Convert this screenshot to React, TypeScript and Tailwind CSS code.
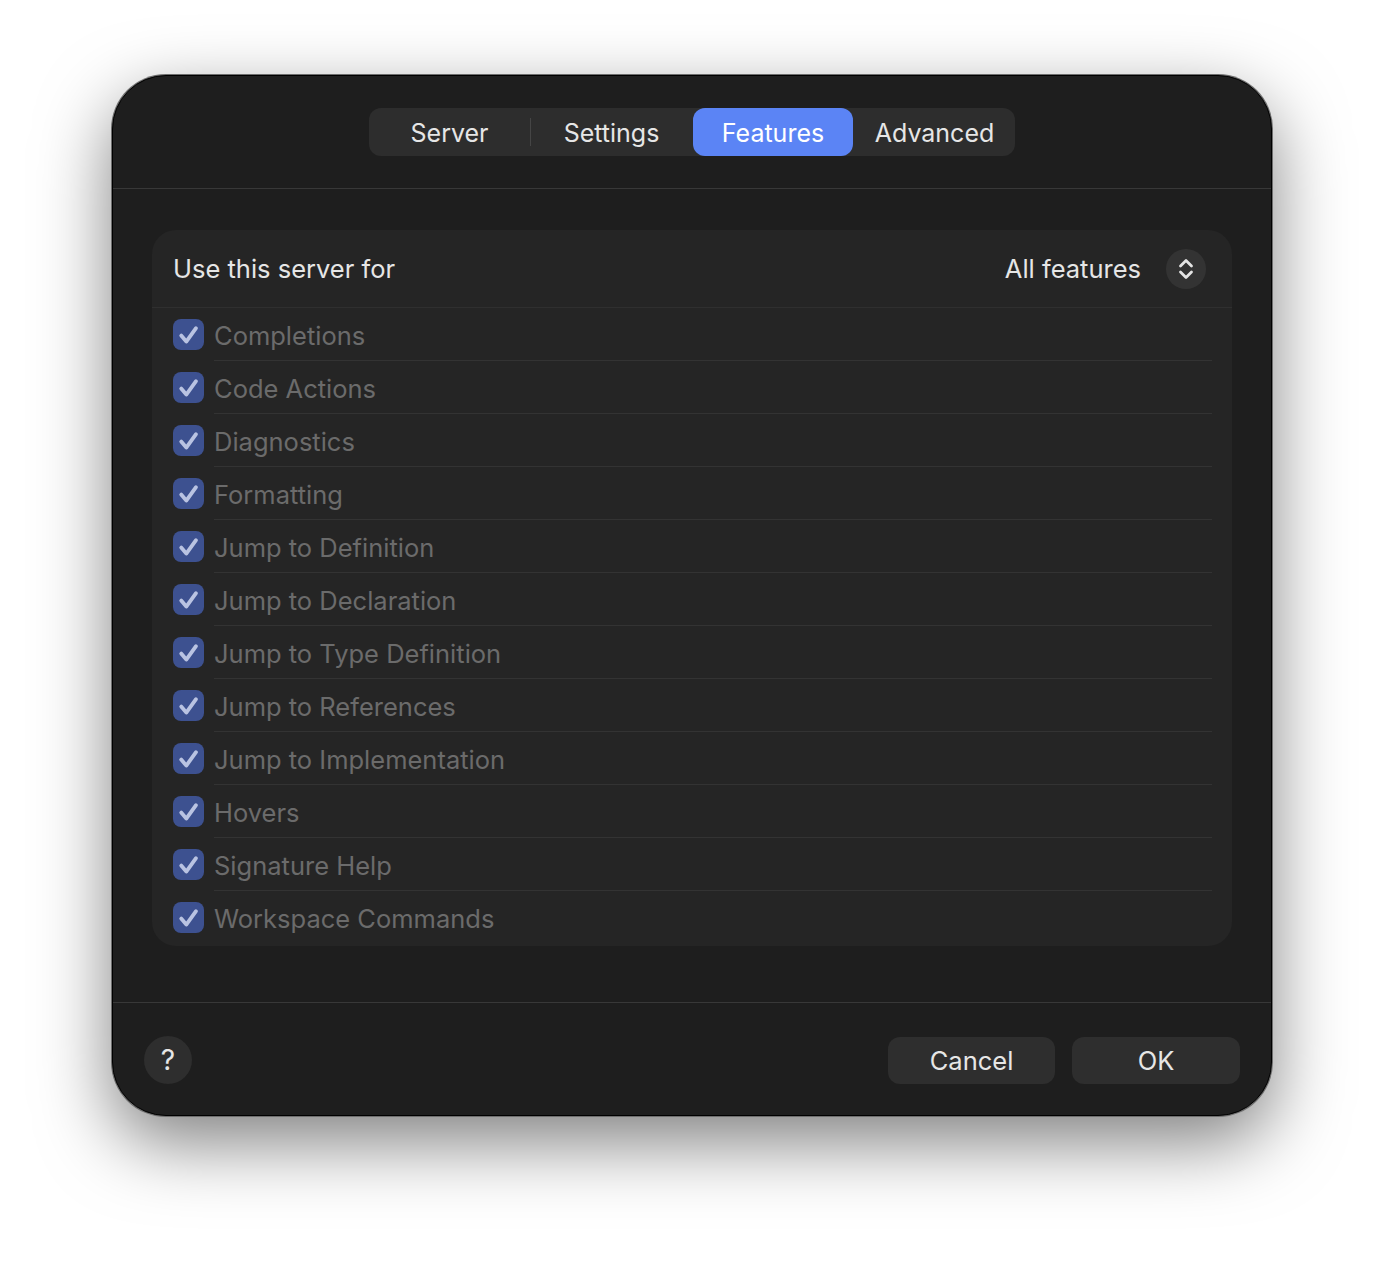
const tabs = ["Server", "Settings", "Features", "Advanced"];

const features = [
  "Completions",
  "Code Actions",
  "Diagnostics",
  "Formatting",
  "Jump to Definition",
  "Jump to Declaration",
  "Jump to Type Definition",
  "Jump to References",
  "Jump to Implementation",
  "Hovers",
  "Signature Help",
  "Workspace Commands",
];

function Check() {
  return (
    <div className="flex h-[31px] w-[31px] shrink-0 items-center justify-center rounded-[8px] bg-[#3d5190]">
      <svg width="31" height="31" viewBox="0 0 31 31" fill="none">
        <path
          d="M8.2 16.6 L13.3 22.6 L23 9.2"
          stroke="#b9c3e2"
          strokeWidth="3.8"
          strokeLinecap="round"
          strokeLinejoin="round"
        />
      </svg>
    </div>
  );
}

function Chevrons() {
  return (
    <svg width="40" height="40" viewBox="0 0 40 40" fill="none">
      <path
        d="M14.5 17 L20 11.5 L25.5 17"
        stroke="#e4e4e4"
        strokeWidth="2.8"
        strokeLinecap="round"
        strokeLinejoin="round"
      />
      <path
        d="M14.5 23 L20 28.5 L25.5 23"
        stroke="#e4e4e4"
        strokeWidth="2.8"
        strokeLinecap="round"
        strokeLinejoin="round"
      />
    </svg>
  );
}

export default function App() {
  const active = "Features";

  return (
    <div className="flex min-h-[1264px] justify-center bg-white pt-[75px] font-['Inter','Liberation_Sans',sans-serif]">
      <div className="flex h-[1041px] w-[1160px] flex-col overflow-hidden rounded-[54px] border border-black bg-[#1e1e1e] text-[#e6e6e6] shadow-[0_0_0_1px_#6e6e6e,0_26px_72px_rgba(0,0,0,0.5)]">
        {/* Tab bar */}
        <div className="flex h-[113px] shrink-0 items-center justify-center border-b border-[#383838]">
          <div className="flex h-[48px] rounded-[12px] bg-[#2d2d2d]">
            {tabs.map((t, i) => {
              const selected = t === active;
              const showDivider =
                i > 0 && !selected && tabs[i - 1] !== active;
              return (
                <div key={t} className="flex items-center">
                  {i > 0 && (
                    <div
                      className={
                        showDivider
                          ? "h-[28px] w-px bg-[#454545]"
                          : "h-[28px] w-px bg-transparent"
                      }
                    />
                  )}
                  <div
                    className={
                      selected
                        ? "flex h-[48px] w-[160px] items-center justify-center rounded-[12px] bg-[#5b84f5] pt-[3px] text-[25px] text-white"
                        : "flex h-[48px] w-[161px] items-center justify-center pt-[3px] text-[25px] text-[#e6e6e6]"
                    }
                  >
                    {t}
                  </div>
                </div>
              );
            })}
          </div>
        </div>

        {/* Content */}
        <div className="flex-1 px-[39px] pt-[41px]">
          <div className="rounded-[24px] bg-[#252525]">
            <div className="flex h-[78px] items-center justify-between border-b border-[#2f2f2f] pl-[21px] pr-[26px]">
              <span className="pt-[2px] text-[25.5px] text-[#e6e6e6]">Use this server for</span>
              <div className="flex items-center gap-[25px]">
                <span className="pt-[2px] text-[25.5px] text-[#e6e6e6]">All features</span>
                <div className="flex h-[40px] w-[40px] items-center justify-center rounded-full bg-[#333333]">
                  <Chevrons />
                </div>
              </div>
            </div>
            <div className="pb-[2px] pl-[21px] pr-[20px]">
              {features.map((f, i) => (
                <div key={f} className="flex items-center gap-[10px]">
                  <Check />
                  <div
                    className={
                      i < features.length - 1
                        ? "flex h-[53px] flex-1 items-center border-b border-[#333333] pt-[4px]"
                        : "flex h-[53px] flex-1 items-center pt-[4px]"
                    }
                  >
                    <span className="text-[25.5px] text-[#6b6b6b]">{f}</span>
                  </div>
                </div>
              ))}
            </div>
          </div>
        </div>

        {/* Footer */}
        <div className="flex h-[113px] shrink-0 items-center justify-between border-t border-[#383838] px-[31px] pt-[2px]">
          <div className="flex h-[48px] w-[48px] items-center justify-center rounded-full bg-[#2e2e2e] text-[28px] text-[#e6e6e6]">
            ?
          </div>
          <div className="flex gap-[17px]">
            <div className="flex h-[47px] w-[167px] items-center justify-center rounded-[12px] bg-[#2e2e2e] pt-[2px] text-[25.5px] text-[#e6e6e6]">
              Cancel
            </div>
            <div className="flex h-[47px] w-[168px] items-center justify-center rounded-[12px] bg-[#2e2e2e] pt-[2px] text-[25.5px] text-[#e6e6e6]">
              OK
            </div>
          </div>
        </div>
      </div>
    </div>
  );
}
